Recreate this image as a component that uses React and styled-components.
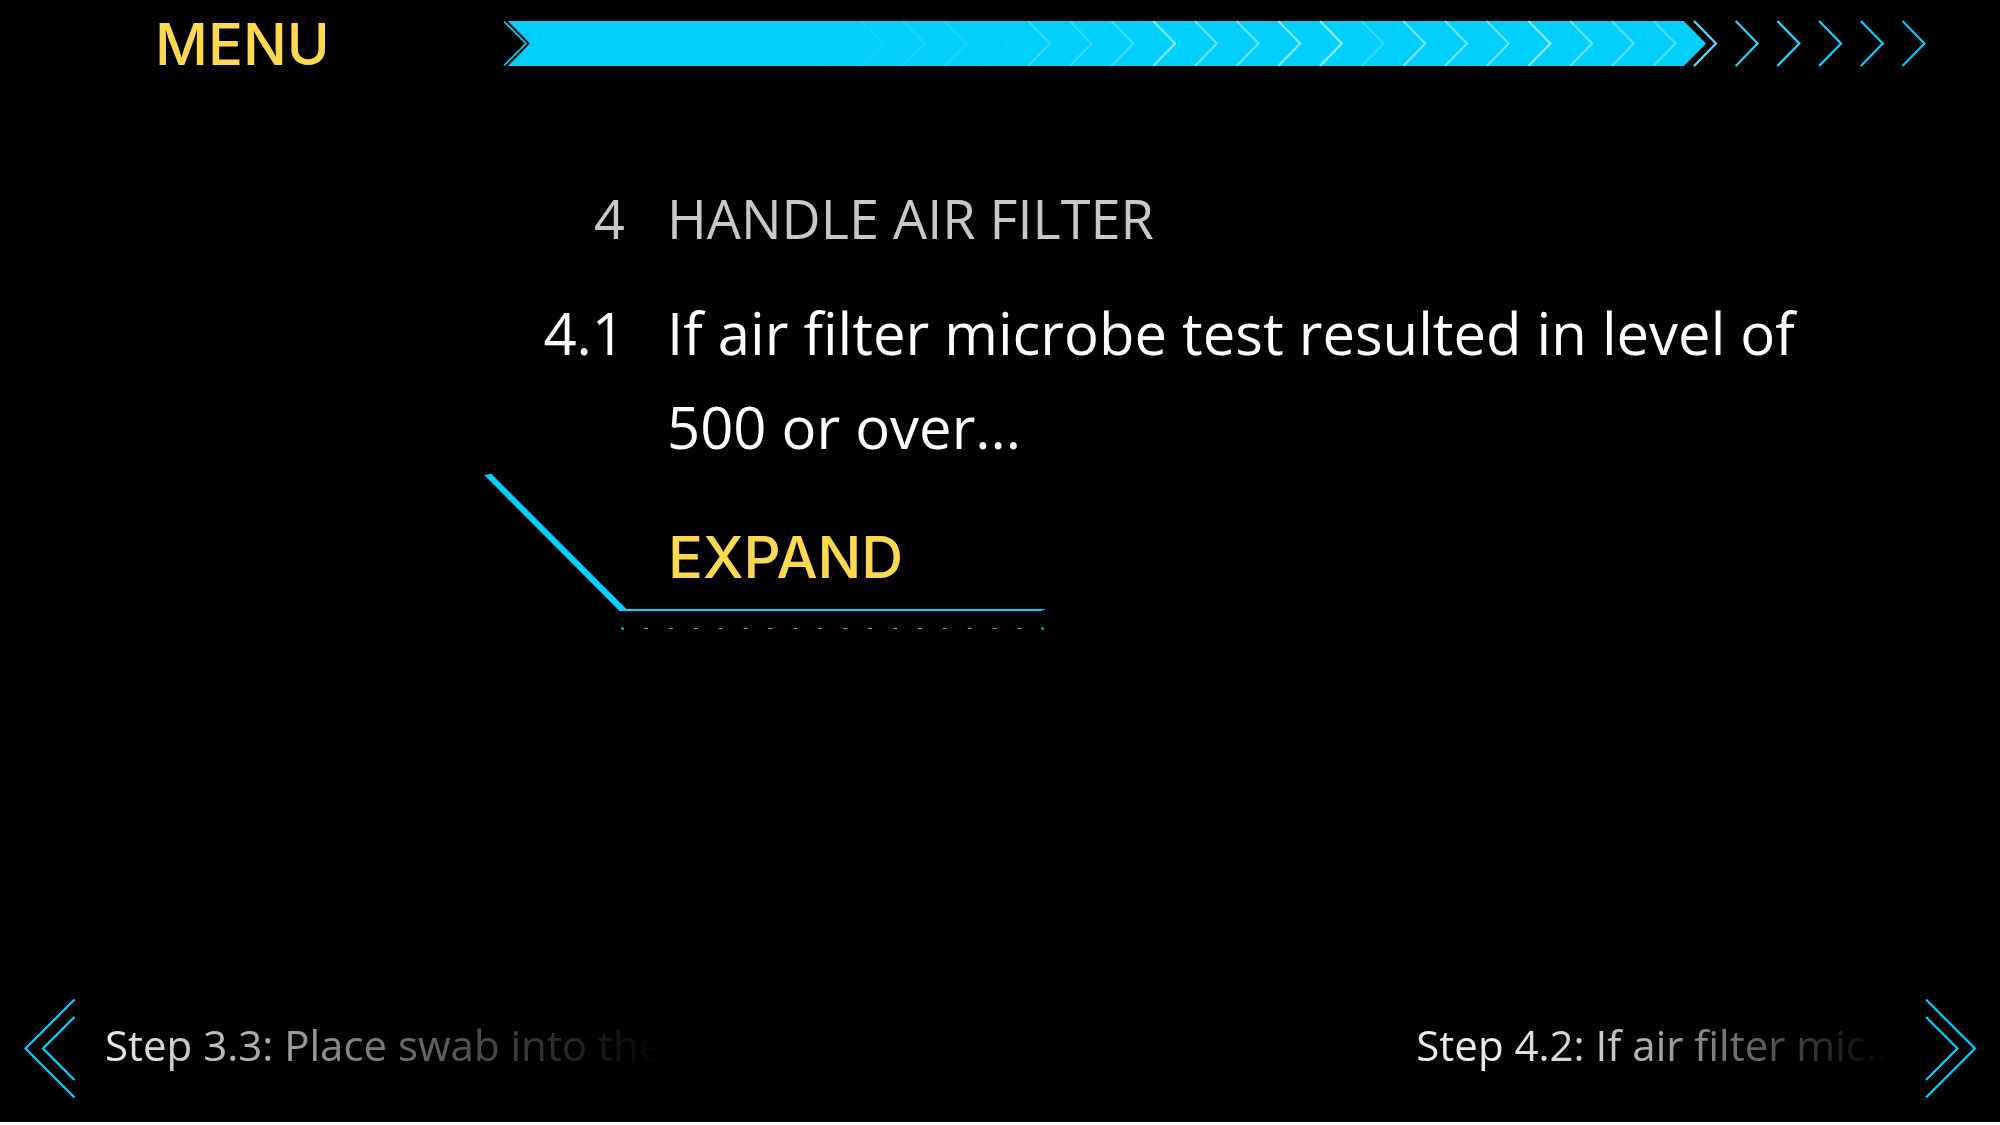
import React from "react";
import styled, { createGlobalStyle } from "styled-components";

const CYAN = "#00cfff";
const YELLOW = "#fdd94f";

const GlobalStyle = createGlobalStyle`
  *, *::before, *::after { box-sizing: border-box; }
  body {
    margin: 0;
    background: #fff;
    font-family: "Open Sans", "Noto Sans", sans-serif;
  }
`;

const Screen = styled.div`
  display: flex;
  flex-direction: column;
  min-height: calc(100vh - 3px);
  background: #000;
  color: #fff;
`;

const Header = styled.header`
  display: grid;
  grid-template-columns: 500px minmax(0, 1fr);
  align-items: center;
  padding: 8px 72px 0 0;
`;

const CommandButton = styled.button`
  justify-self: start;
  margin: 0;
  padding: 0;
  border: 0;
  background: none;
  color: ${YELLOW};
  font-family: Inter, "Liberation Sans", sans-serif;
  font-size: 58px;
  font-weight: 500;
  line-height: 72px;
  text-transform: uppercase;
  cursor: pointer;
`;

const MenuSlot = styled.nav`
  display: flex;
  padding-left: 155px;
`;

const ProgressArt = styled.svg`
  display: block;
  width: 100%;
  height: auto;
`;

const Main = styled.main`
  flex: 1;
  display: flex;
  flex-direction: column;
  padding-top: 101px;
`;

const StepRow = styled.div`
  display: grid;
  grid-template-columns: 625px minmax(0, 1fr);
  column-gap: 42px;
  padding-right: 152px;
  margin-bottom: ${(p) => p.$gap || 0}px;
`;

const Heading = styled.h1`
  margin: 0;
  color: #c8c8c8;
  font-size: 54px;
  font-weight: 400;
  line-height: 74px;
  text-transform: uppercase;
`;

const Instruction = styled.p`
  margin: 0;
  font-size: 58px;
  line-height: 94px;
`;

const NumberText = styled.span`
  text-align: right;
  color: ${(p) => (p.$muted ? "#c8c8c8" : "#fff")};
  font-size: ${(p) => (p.$muted ? 54 : 58)}px;
  line-height: ${(p) => (p.$muted ? 74 : 94)}px;
`;

const Action = styled.div`
  display: grid;
  justify-items: start;
  padding-left: 484px;

  & > * { grid-area: 1 / 1; }
`;

const ActionFrame = styled.svg`
  display: block;
  pointer-events: none;
`;

const ActionSlot = styled.div`
  padding: 47px 0 0 184px;
`;

const Footer = styled.footer`
  display: flex;
  justify-content: space-between;
  padding: 0 23px 23px;
`;

const StepLink = styled.a`
  display: flex;
  align-items: center;
  gap: ${(p) => p.$gap}px;
  color: #ebebeb;
  text-decoration: none;
`;

const StepLabel = styled.span`
  padding-bottom: 8px;
  font-size: 42px;
  line-height: 58px;
  white-space: nowrap;
  mask-image: linear-gradient(to right, ${(p) => p.$fade});
`;

const ChevronArt = styled.svg`
  display: block;
  flex: none;
`;

const FILLED = [
  0.03, 0.07, 0.1, 0.1, 0.04, 0.22, 0.2, 0.25, 0.5, 0.4, 0.4, 0.5, 0.55, 0.2,
  0.45, 0.42, 0.42, 0.55, 0.4, 0.35, 0.3,
];
const REMAINING = ["#5cdcff", "#30d0fa", "#30d6ff", "#18d0ff", "#08cdff", "#00c4f5"];
const PITCH = 41.7;

const chevron = (tip) => `M${tip - 22} 1 L${tip} 23.5 L${tip - 22} 46`;

function Progress() {
  return (
    <ProgressArt viewBox="0 0 1428 48" role="img" aria-label="Procedure progress" fill="none">
      <path d="M8 1 H1184 L1206 23.5 L1184 46 H8 L30 23.5 Z" fill={CYAN} />
      <path d="M4 1.5 L26 23.5 L4 45.5" stroke={CYAN} strokeWidth="1.6" />
      {FILLED.map((o, i) => (
        <path key={i} d={chevron(341.5 + i * PITCH)} stroke="#fff" strokeOpacity={o} strokeWidth="2.2" />
      ))}
      {REMAINING.map((c, i) => (
        <path key={c} d={chevron(1216 + i * PITCH)} stroke={c} strokeWidth="2.2" />
      ))}
    </ProgressArt>
  );
}

function Frame() {
  const dashes = Array.from({ length: 16 }, (_, i) => 160 + i * 24.9);
  return (
    <ActionFrame width="564" height="158" viewBox="0 0 564 158" aria-hidden="true">
      <path d="M0.5 1.3 Q3 0 7.5 0 L142.5 135 H562 L557 137 H135.5 Z" fill={CYAN} />
      {dashes.map((x) => (
        <rect key={x} x={x} y="154" width="4" height="1" fill={CYAN} />
      ))}
      <circle cx="138.5" cy="154.5" r="1.5" fill={CYAN} fillOpacity="0.8" />
      <circle cx="558.5" cy="154.5" r="1.5" fill={CYAN} fillOpacity="0.8" />
    </ActionFrame>
  );
}

function Chevrons({ next }) {
  return (
    <ChevronArt width="54" height="100" viewBox="0 0 54 100" fill="none" stroke={CYAN} strokeWidth="2.2" aria-hidden="true">
      {next ? (
        <path d="M3 0.5 L52 49.5 L3 98.5 M3 18 L34.5 49.5 L3 81" />
      ) : (
        <path d="M51.5 0.5 L2.5 49.5 L51.5 98.5 M51.5 18 L20 49.5 L51.5 81" />
      )}
    </ChevronArt>
  );
}

export default function App() {
  return (
    <>
      <GlobalStyle />
      <Screen>
        <Header>
          <MenuSlot>
            <CommandButton type="button">Menu</CommandButton>
          </MenuSlot>
          <Progress />
        </Header>
        <Main>
          <StepRow $gap={31}>
            <NumberText $muted>4</NumberText>
            <Heading>Handle air filter</Heading>
          </StepRow>
          <StepRow>
            <NumberText>4.1</NumberText>
            <Instruction>If air filter microbe test resulted in level of 500 or over...</Instruction>
          </StepRow>
          <Action>
            <Frame />
            <ActionSlot>
              <CommandButton type="button">Expand</CommandButton>
            </ActionSlot>
          </Action>
        </Main>
        <Footer>
          <StepLink href="#step-3-3" $gap={28}>
            <Chevrons />
            <StepLabel $fade="#000, transparent">Step 3.3: Place swab into the</StepLabel>
          </StepLink>
          <StepLink href="#step-4-2" $gap={24}>
            <StepLabel $fade="#000 15%, rgba(0, 0, 0, 0.85) 40%, transparent 98%">Step 4.2: If air filter mic...</StepLabel>
            <Chevrons next />
          </StepLink>
        </Footer>
      </Screen>
    </>
  );
}
